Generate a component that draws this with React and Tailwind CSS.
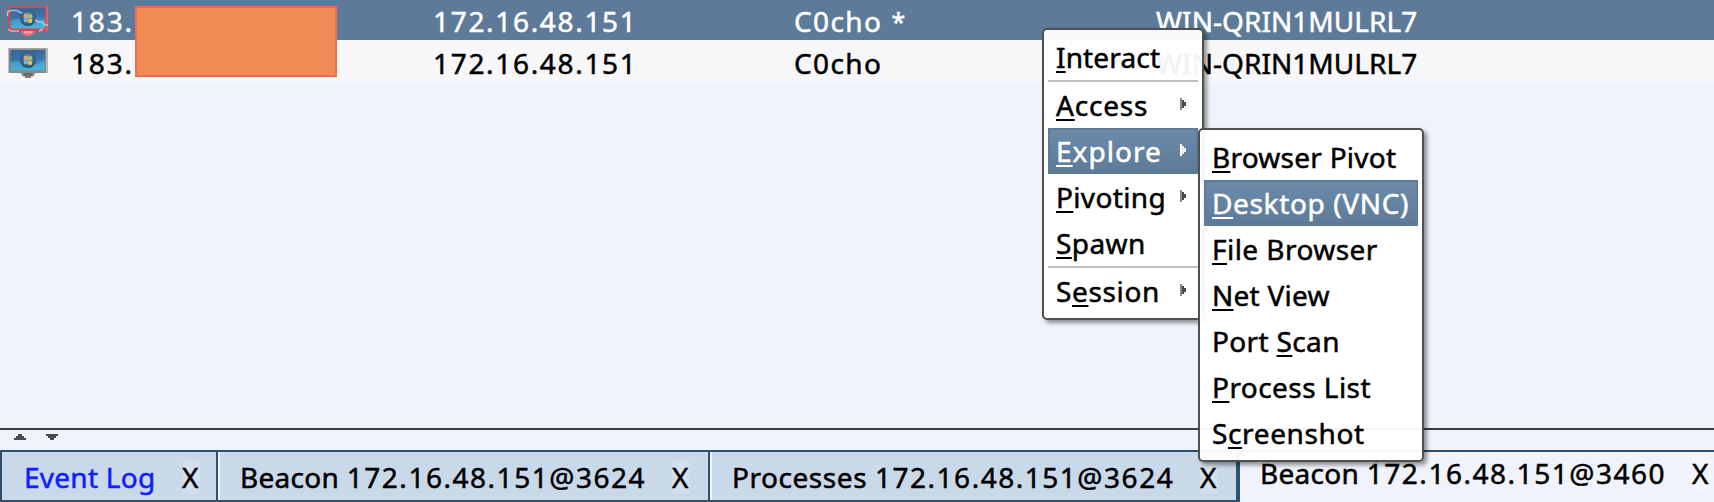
import React from "react";

const MENU = [
  { pre: "", key: "I", post: "nteract", track: "tracking-[0.15px]" },
  { sep: true },
  { pre: "", key: "A", post: "ccess", track: "tracking-[0.8px]", arrow: true },
  { pre: "", key: "E", post: "xplore", track: "tracking-[1.04px]", arrow: true, active: true },
  { pre: "", key: "P", post: "ivoting", track: "tracking-[0.35px]", arrow: true },
  { pre: "", key: "S", post: "pawn", track: "tracking-[0.42px]" },
  { sep: true },
  { pre: "S", key: "e", post: "ssion", track: "tracking-[0.64px]", arrow: true },
];

const SUBMENU = [
  { pre: "", key: "B", post: "rowser Pivot", track: "tracking-[0.25px]" },
  { pre: "", key: "D", post: "esktop (VNC)", track: "tracking-[0.64px]", active: true },
  { pre: "", key: "F", post: "ile Browser", track: "tracking-[0.45px]" },
  { pre: "", key: "N", post: "et View", track: "tracking-[0.25px]" },
  { pre: "Port ", key: "S", post: "can", track: "tracking-[0.35px]" },
  { pre: "", key: "P", post: "rocess List", track: "tracking-[0.45px]" },
  { pre: "S", key: "c", post: "reenshot", track: "tracking-[0.63px]" },
];

function Monitor({ hot }) {
  const id = hot ? "hot" : "cold";
  return (
    <svg width="44" height="32" viewBox="0 0 44 32" className="block">
      <defs>
        <linearGradient id={`scr-${id}`} x1="0" y1="0" x2="0.2" y2="1">
          <stop offset="0" stopColor="#3a6296" />
          <stop offset="0.55" stopColor="#3877aa" />
          <stop offset="1" stopColor="#49a8d0" />
        </linearGradient>
        <radialGradient id={`orb-${id}`} cx="0.5" cy="0.45" r="0.55">
          <stop offset="0" stopColor="#8fb0bd" />
          <stop offset="0.6" stopColor="#47718f" />
          <stop offset="1" stopColor="#1f4670" />
        </radialGradient>
      </defs>
      <path d="M15 25h14v2.500h-1.500v2h-2.500v1.500h-6v-1.500h-2.500v-2h-1.500z" fill={hot ? "#e8707a" : "#7d7f80"} />
      <path d="M18 26h8v2.500h-8z" fill={hot ? "#f6a0a0" : "#646667"} />
      <rect x="2.500" y="1" width="39" height="25" fill={hot ? "#d8434f" : "#858788"} />
      <rect x="2.500" y="1" width="39" height="1.500" fill={hot ? "#c8505c" : "#a0a2a3"} />
      <rect x="40" y="1" width="2" height="25" fill={hot ? "#d9626c" : "#b4b6b7"} />
      <rect x="4.500" y="3" width="34.500" height="20.500" fill={`url(#scr-${id})`} />
      <path d="M4.500 16c5-4 11-2 15 1s12 0 19.500-3v9.500h-34.500z" fill="#4fb6d8" opacity="0.5" />
      <circle cx="22" cy="13" r="8" fill={`url(#orb-${id})`} />
      <path d="M18 9q2-1 3.700-.2v3.900q-1.900-.6-3.700.2z" fill="#e0a080" />
      <path d="M22.300 9q1.700.8 3.700 0v3.700q-2 .8-3.700 0z" fill="#a9c46a" />
      <path d="M18 13.700q1.900-.8 3.700 0v3.600q-1.700-.8-3.700 0z" fill="#7fb2d2" />
      <path d="M22.300 13.900q1.700.8 3.700 0v3.700q-2 .8-3.700 0z" fill="#ecc85e" />
      {hot && (
        <g fill="none" strokeWidth="1.400" opacity="0.8">
          <path d="M1.500 11v-4l3-1.500h7l2 2h3M29 15l4 2h3l3 3h3" stroke="#c9d6ee" />
          <path d="M2 24l3 2h8M33 26l4-2" stroke="#edc3cc" />
        </g>
      )}
    </svg>
  );
}

function HostRow({ selected, user }) {
  return (
    <div
      className={
        selected
          ? "flex h-[40px] shrink-0 items-start bg-[#5e7a99] leading-[42px] text-white"
          : "flex h-[42px] shrink-0 items-start bg-[#f7f7f9] leading-[46px] text-black"
      }
    >
      <div className={selected ? "w-[71px] shrink-0 pl-[6px] pt-[5px]" : "w-[71px] shrink-0 pl-[6px] pt-[7px]"}>
        <Monitor hot={selected} />
      </div>
      <div className="w-[362px] shrink-0 tracking-[1.8px]">183.</div>
      <div className="w-[361px] shrink-0 tracking-[1.68px]">172.16.48.151</div>
      <div className="flex w-[362px] shrink-0 gap-[9px]">
        <span className="tracking-[1.4px]">{user}</span>
        {selected && <span className="text-[25px]">*</span>}
      </div>
      <div className="tracking-[0.05px]">WIN-QRIN1MULRL7</div>
    </div>
  );
}

function MenuItem({ item }) {
  if (item.sep) return <div className="h-[2px] bg-[#bdbdbd]" />;
  return (
    <div
      className={
        item.active
          ? "flex h-[46px] items-center justify-between border-2 border-[#5d7b9b] bg-linear-to-b from-[#6c8aa9] to-[#5d7a99] pl-[6px] pr-[10px] text-white"
          : "flex h-[46px] items-center justify-between pl-[8px] pr-[12px] text-black"
      }
    >
      <span className={`whitespace-pre leading-[46px] ${item.track}`}>
        {item.pre}
        <span className="underline decoration-2 underline-offset-[3px] [text-decoration-skip-ink:none]">{item.key}</span>
        {item.post}
      </span>
      {item.arrow && (
        <svg width="6" height="12" viewBox="0 0 6 12" className="-mt-[2px] shrink-0">
          <path d="M0 0h2v2h2v2h2v4h-2v2h-2v2h-2z" fill={item.active ? "#f1eee8" : "#484848"} />
          <path d="M0 0h2v12h-2z" fill={item.active ? "#ffffff" : "#8a8a8a"} />
        </svg>
      )}
    </div>
  );
}

function Menu({ items, place }) {
  return (
    <div
      className={`absolute rounded-[5px] border-2 border-[#505050] bg-white/95 p-[4px] shadow-[3px_3px_4px_rgba(0,0,0,0.42)] ${place}`}
    >
      {items.map((item, i) => (
        <MenuItem key={i} item={item} />
      ))}
    </div>
  );
}

function Tab({ title, address, box, label, close }) {
  return (
    <div className={`flex h-full shrink-0 items-start whitespace-pre ${box}`}>
      <div className={`shrink-0 ${label}`}>
        <span>{title}</span>
        <span className="tracking-[1.52px]">{address}</span>
      </div>
      <div className={close}>X</div>
    </div>
  );
}

const CLOSE = "mt-[8px] h-[34px] w-[18px] bg-radial from-[#dbe6f0] to-[#cedbea] leading-[34px]";

export default function App() {
  return (
    <div className="relative flex h-[502px] w-[1714px] flex-col overflow-hidden bg-[#eff3fb] font-['Noto_Sans','Open_Sans',sans-serif] text-[28px] text-black [-webkit-text-stroke:0.5px]">
      <HostRow selected user="C0cho" />
      <HostRow user="C0cho" />
      <div className="flex-1" />
      <div className="flex h-[22px] shrink-0 items-start gap-[20px] border-t-2 border-[#3f3d43] pl-[14px] pt-[4px]">
        <svg width="12" height="6" viewBox="0 0 12 6">
          <path d="M4 0h4v2h2v2h2v2h-12v-2h2v-2h2z" fill="#4a4a4c" />
        </svg>
        <svg width="12" height="6" viewBox="0 0 12 6">
          <path d="M0 0h12v2h-2v2h-2v2h-4v-2h-2v-2h-2z" fill="#4a4a4c" />
        </svg>
      </div>
      <div className="flex h-[52px] shrink-0 border-t-2 border-[#2e506e]">
        <Tab
          title="Event Log"
          box="w-[218px] border-x-2 border-b-2 border-[#2e506e] bg-[#cad9e9]"
          label="ml-[22px] w-[158px] leading-[50px] text-[#1020ff] tracking-[0.25px]"
          close={CLOSE}
        />
        <div className="w-[2px] shrink-0 border-b-2 border-[#2e506e] bg-[#f2f6fa]" />
        <Tab
          title="Beacon "
          address="172.16.48.151@3624"
          box="w-[490px] border-b-2 border-r-2 border-[#2e506e] bg-[#cad9e9]"
          label="ml-[20px] w-[432px] leading-[50px] tracking-[0.3px]"
          close={CLOSE}
        />
        <div className="w-[2px] shrink-0 border-b-2 border-[#2e506e] bg-[#f2f6fa]" />
        <Tab
          title="Processes "
          address="172.16.48.151@3624"
          box="w-[528px] border-b-2 border-r-4 border-[#2e506e] bg-[#cad9e9]"
          label="ml-[20px] w-[468px] leading-[50px] tracking-[0.55px]"
          close={CLOSE}
        />
        <Tab
          title="Beacon "
          address="172.16.48.151@3460"
          box="w-[474px] bg-[#f0f3fb]"
          label="ml-[20px] w-[432px] leading-[42px] tracking-[0.3px]"
          close="mt-[4px] h-[34px] w-[18px] bg-[#f4f6fb] leading-[34px]"
        />
      </div>

      <div className="absolute left-[135px] top-[6px] h-[71px] w-[202px] border-2 border-[#ee6a52] bg-[#f08c56]" />
      <Menu items={MENU} place="left-[1042px] top-[28px] w-[162px]" />
      <Menu items={SUBMENU} place="left-[1198px] top-[128px] w-[226px]" />
    </div>
  );
}
